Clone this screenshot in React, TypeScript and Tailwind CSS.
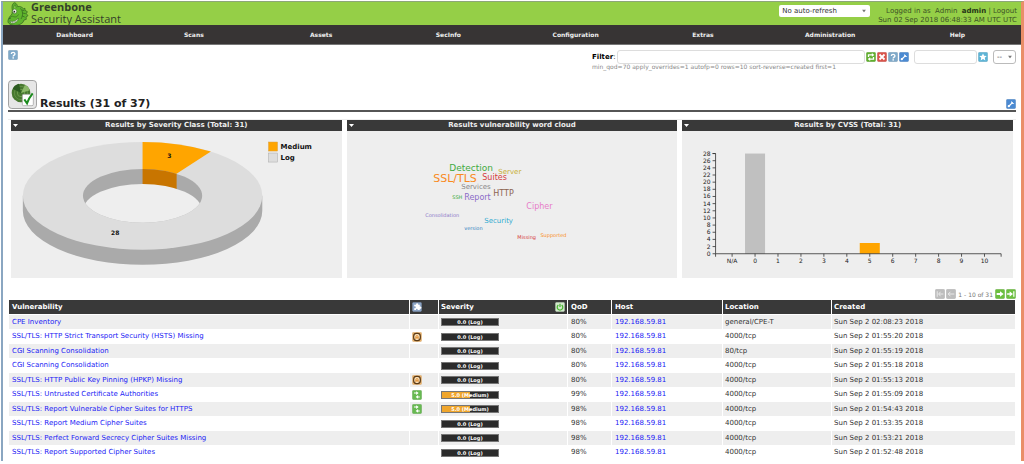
import React from "react";

type Result = {
  name: string;
  fix?: "workaround" | "vendor";
  severity: number;
  level: string;
  qod: string;
  location: string;
  created: string;
};

const host = "192.168.59.81";

const results: Result[] = [
  { name: "CPE Inventory", severity: 0, level: "Log", qod: "80%", location: "general/CPE-T", created: "Sun Sep 2 02:08:23 2018" },
  { name: "SSL/TLS: HTTP Strict Transport Security (HSTS) Missing", fix: "workaround", severity: 0, level: "Log", qod: "80%", location: "4000/tcp", created: "Sun Sep 2 01:55:20 2018" },
  { name: "CGI Scanning Consolidation", severity: 0, level: "Log", qod: "80%", location: "80/tcp", created: "Sun Sep 2 01:55:19 2018" },
  { name: "CGI Scanning Consolidation", severity: 0, level: "Log", qod: "80%", location: "4000/tcp", created: "Sun Sep 2 01:55:18 2018" },
  { name: "SSL/TLS: HTTP Public Key Pinning (HPKP) Missing", fix: "workaround", severity: 0, level: "Log", qod: "80%", location: "4000/tcp", created: "Sun Sep 2 01:55:13 2018" },
  { name: "SSL/TLS: Untrusted Certificate Authorities", fix: "vendor", severity: 5, level: "Medium", qod: "99%", location: "4000/tcp", created: "Sun Sep 2 01:55:09 2018" },
  { name: "SSL/TLS: Report Vulnerable Cipher Suites for HTTPS", fix: "vendor", severity: 5, level: "Medium", qod: "98%", location: "4000/tcp", created: "Sun Sep 2 01:54:43 2018" },
  { name: "SSL/TLS: Report Medium Cipher Suites", severity: 0, level: "Log", qod: "98%", location: "4000/tcp", created: "Sun Sep 2 01:53:35 2018" },
  { name: "SSL/TLS: Perfect Forward Secrecy Cipher Suites Missing", severity: 0, level: "Log", qod: "98%", location: "4000/tcp", created: "Sun Sep 2 01:53:21 2018" },
  { name: "SSL/TLS: Report Supported Cipher Suites", severity: 0, level: "Log", qod: "98%", location: "4000/tcp", created: "Sun Sep 2 01:52:48 2018" },
];

const menu = ["Dashboard", "Scans", "Assets", "SecInfo", "Configuration", "Extras", "Administration", "Help"];

type IconName = "help" | "refresh" | "delete" | "edit" | "star" | "first" | "previous" | "next" | "last" | "workaround" | "vendor" | "solution" | "power";

const iconFill: Record<IconName, string> = {
  help: "#7fa9c9",
  refresh: "#5fae2c",
  delete: "#d9534a",
  edit: "#4b8ad2",
  star: "#5cb4d6",
  first: "#bdbdbd",
  previous: "#bdbdbd",
  next: "#6cbf3f",
  last: "#6cbf3f",
  workaround: "#f0b870",
  vendor: "#67b951",
  solution: "#8ba3c4",
  power: "#d3e9cd",
};

function Glyph({ name }: { name: IconName }) {
  const line = { fill: "none", stroke: "#fff", strokeWidth: 2.4 };
  switch (name) {
    case "help":
      return (
        <g>
          <path d="M6 7.2C6 3.6 12.4 3.4 12.4 7c0 2.2-3.1 2.2-3.1 4.6" {...line} />
          <circle cx="9.3" cy="14.2" r="1.4" fill="#fff" />
        </g>
      );
    case "refresh":
      return (
        <g>
          <path d="M4.5 9V5.2H12M13.5 9v3.8H6" {...line} />
          <path d="M10.5 2l4.5 3.3-4.5 3.2zM7.5 9.5L3 12.8 7.5 16z" fill="#fff" />
        </g>
      );
    case "delete":
      return <path d="M4.5 4.5l9 9M13.5 4.5l-9 9" fill="none" stroke="#fff" strokeWidth="3.2" />;
    case "edit":
      return (
        <g>
          <path d="M5 13l7-7" fill="none" stroke="#fff" strokeWidth="2.2" />
          <path d="M11 3a3.6 3.6 0 0 0-1 5 3.6 3.6 0 0 0 5-1l-2.6.2-1.6-1.6z" fill="#fff" />
          <circle cx="5" cy="13" r="2" fill="#fff" />
        </g>
      );
    case "star":
      return <path d="M9 2.5l2 4.3 4.7.5-3.5 3.2 1 4.7L9 12.8l-4.2 2.4 1-4.7-3.500-3.2 4.7-.5z" fill="#fff" />;
    case "first":
      return <path d="M4 4v10M7 9h8M10 5L6.5 9l3.5 4" {...line} strokeWidth={1.6} stroke="#eee" />;
    case "previous":
      return <path d="M4 9h11M8 5L4 9l4 4" {...line} strokeWidth={1.6} stroke="#eee" />;
    case "next":
      return <path d="M3 7.3h6V4l6.5 5L9 14v-3.300H3z" fill="#fff" />;
    case "last":
      return <path d="M2 7.500h4.500V4l6 5-6 5v-3.500H2zM13 4h2.200v10H13z" fill="#fff" />;
    case "workaround":
      return (
        <g>
          <rect x="3" y="2.6" width="12" height="12.800" rx="5" fill="#fbe3bd" stroke="#5b3a16" strokeWidth="2.200" />
          <path d="M7 12.500V8.500a2 2 0 0 1 4 0v4M7 10.300h4" fill="none" stroke="#e08f35" strokeWidth="1.800" />
        </g>
      );
    case "vendor":
      return (
        <g>
          <path d="M3.500 5.500h6M9 12.500h5" {...line} strokeWidth={2} />
          <path d="M7.500 2.200L12 5.500 7.500 8.800zM11 9.200l-4.500 3.300 4.500 3.300z" fill="#fff" />
        </g>
      );
    case "solution":
      return <path d="M4 5h3.500a2 2 0 1 1 3.500 0h3v3.500a2 2 0 1 1 0 3.500v2.500h-4a1.500 1.500 0 1 0-2.500 0H4V11a1.800 1.800 0 1 0 0-3z" fill="#fff" />;
    case "power":
      return (
        <g>
          <path d="M6 5.500a5 5 0 1 0 6 0" fill="none" stroke="#4cb534" strokeWidth="2.300" />
          <path d="M9 3v6" stroke="#4cb534" strokeWidth="2.300" />
        </g>
      );
  }
}

function Icon({ name }: { name: IconName }) {
  return (
    <svg viewBox="0 0 18 18" className="block size-[10px] shrink-0" aria-hidden="true">
      <rect x="0.500" y="0.500" width="17" height="17" rx="2" fill={iconFill[name]} stroke="#000" strokeOpacity="0.120" />
      <Glyph name={name} />
    </svg>
  );
}

function IconButton({ name, label }: { name: IconName; label: string }) {
  return (
    <button type="button" aria-label={label} className="block">
      <Icon name={name} />
    </button>
  );
}

function DragonLogo() {
  return (
    <svg viewBox="0 0 66 69" className="block h-[23px] w-[22px] shrink-0" aria-hidden="true">
      <path d="M16 24C13 13 17 3 23 2c6 2 8 8 9 12 7-2 13 1 17 6l5-1v6l7 4-3 6 5 6-6 4 1 7-7 2-3 7-7 5c-6 4-14 5-21 4C9 68 2 64 3 56c1-9 7-14 12-20z" fill="#5fb52c" stroke="#2f5a20" strokeWidth="2" />
      <path d="M20 20c0-6 2-10 4-12 2 3 3 7 3 10" fill="#8ad54e" stroke="#2f5a20" strokeWidth="1.500" />
      <path d="M6 52c3-8 9-11 14-8 6 3 12-1 15-7" fill="none" stroke="#2f5a20" strokeWidth="1.500" />
      <path d="M40 19c8 8 9 20 2 32M45 24l7 2M47 33l9 2M46 42l7 3" fill="none" stroke="#2f5a20" strokeWidth="2" />
      <ellipse cx="23" cy="28" rx="6" ry="7" fill="#f4f8ec" stroke="#2f5a20" strokeWidth="1.500" />
      <circle cx="22" cy="29" r="2.500" fill="#222" />
      <path d="M8 57c9 3 20 0 27-9-1 9-10 16-21 16z" fill="#f4f4ee" stroke="#2f5a20" strokeWidth="1.500" />
      <path d="M16 59l2 4M23 57l3 4" stroke="#2f5a20" strokeWidth="1.500" />
      <circle cx="9" cy="49" r="2" fill="#2f5a20" />
    </svg>
  );
}

function ResultsIcon() {
  return (
    <svg viewBox="0 0 87 87" className="block size-[29px] shrink-0" aria-hidden="true">
      <rect x="1.500" y="1.500" width="84" height="84" rx="10" fill="#e6e6e6" stroke="#a2a2a2" strokeWidth="3" />
      <circle cx="39" cy="39" r="28" fill="#47782f" />
      <circle cx="39" cy="39" r="20" fill="none" stroke="#6d9a50" strokeWidth="2" />
      <circle cx="39" cy="39" r="11" fill="none" stroke="#7dab5c" strokeWidth="2" />
      <path d="M39 39L14 26A28 28 0 0 1 33 11z" fill="#2b5a20" />
      <path d="M39 39L66 31A28 28 0 0 0 51 14z" fill="#8cb86a" />
      <rect x="43" y="43" width="33" height="34" rx="4" fill="#fff" stroke="#999" strokeWidth="2" />
      <path d="M49 58l8 12c4-12 9-20 17-30" fill="none" stroke="#1c8b1e" strokeWidth="6" />
    </svg>
  );
}

function Caret() {
  return (
    <svg viewBox="0 0 8 6" className="pointer-events-none absolute top-1/2 right-1 h-[3px] w-[4px] -translate-y-1/2" aria-hidden="true">
      <path d="M0 0h8L4 6z" fill="#777" />
    </svg>
  );
}

function Panel({ title, children }: { title: string; children: React.ReactNode }) {
  return (
    <section className="min-w-0 bg-[#eee]">
      <header className="flex h-[11px] items-center bg-[#393939] px-[2px] text-[#eee]">
        <button type="button" aria-label={`${title} menu`} className="w-1">
          <svg viewBox="0 0 10 6" className="mx-auto block h-[3px] w-[5px]" aria-hidden="true">
            <path d="M0 0h10L5 6z" fill="#fff" />
          </svg>
        </button>
        <h2 className="flex-1 pr-1 text-center text-[7px] leading-[11px] font-bold">{title}</h2>
      </header>
      {children}
    </section>
  );
}

function SeverityDonut() {
  return (
    <svg viewBox="0 0 330 147" className="block w-full" role="img" aria-label="Results by severity class">
      <defs>
        <clipPath id="hole">
          <ellipse cx="131.300" cy="64.700" rx="59.500" ry="26.800" />
        </clipPath>
      </defs>
      <path d="M11.800 64.700v15a119.500 53.800 0 0 0 239 0v-15z" fill="#aaa" />
      <ellipse cx="131.300" cy="64.700" rx="119.500" ry="53.800" fill="#ddd" />
      <path d="M131.300 64.700V10.900A119.500 53.800 0 0 1 199.500 20.500z" fill="#ffa500" />
      <path d="M71 64.700h121v29H71z" fill="#ddd" />
      <g clipPath="url(#hole)">
        <rect x="70" y="36" width="124" height="58" fill="#aaa" />
        <rect x="131.300" y="36" width="34" height="28" fill="#c87500" />
        <ellipse cx="131.300" cy="79.700" rx="59.500" ry="26.800" fill="#eee" />
      </g>
      <g fontSize="6" fontWeight="bold" textAnchor="middle" fill="#111">
        <text x="158" y="27">3</text>
        <text x="104" y="104">28</text>
      </g>
      <rect x="257" y="11" width="9" height="9" fill="#ffa500" stroke="#d9a040" strokeWidth="0.500" />
      <rect x="257" y="22" width="9" height="9" fill="#ddd" stroke="#aaa" strokeWidth="0.500" />
      <g fontSize="7" fontWeight="bold" fill="#111">
        <text x="269" y="18">Medium</text>
        <text x="269" y="29">Log</text>
      </g>
    </svg>
  );
}

const words = [
  { text: "Detection", x: 102, y: 40, size: 9, color: "#3faa3f" },
  { text: "Server", x: 151, y: 43, size: 7, color: "#c9ae35" },
  { text: "SSL/TLS", x: 86, y: 51, size: 11, color: "#f98a20" },
  { text: "Suites", x: 135, y: 49, size: 8, color: "#d63c3c" },
  { text: "Services", x: 114, y: 58, size: 7, color: "#888888" },
  { text: "HTTP", x: 146, y: 65, size: 8, color: "#8c6450" },
  { text: "SSH", x: 105, y: 68, size: 5, color: "#3faa3f" },
  { text: "Report", x: 117, y: 69, size: 8, color: "#8b6cc8" },
  { text: "Cipher", x: 179, y: 78, size: 8, color: "#e77cc8" },
  { text: "Consolidation", x: 78, y: 86, size: 5, color: "#8b78c8" },
  { text: "Security", x: 137, y: 92, size: 7, color: "#2eaad0" },
  { text: "version", x: 117, y: 99, size: 5, color: "#2f7fc0" },
  { text: "Missing", x: 170, y: 108, size: 5, color: "#d63c3c" },
  { text: "Supported", x: 193, y: 106, size: 5, color: "#f98a20" },
];

function WordCloud() {
  return (
    <svg viewBox="0 0 330 147" className="block w-full" role="img" aria-label="Vulnerability word cloud">
      {words.map((w) => (
        <text key={w.text} x={w.x} y={w.y} fontSize={w.size} fill={w.color}>
          {w.text}
        </text>
      ))}
    </svg>
  );
}

const cvssLabels = ["N/A", "0", "1", "2", "3", "4", "5", "6", "7", "8", "9", "10"];
const cvssCounts = [0, 28, 0, 0, 0, 0, 3, 0, 0, 0, 0, 0];

function CvssChart() {
  const bottom = 122.5;
  const unit = 100 / 28;
  const left = 33.5;
  const step = 22.9;
  const center = (i: number) => 50 + i * step;
  return (
    <svg viewBox="0 0 330 147" className="block w-full" role="img" aria-label="Results by CVSS">
      {cvssCounts.map((n, i) =>
        n ? <rect key={i} x={center(i) - 10} y={bottom - n * unit} width="20" height={n * unit} fill={i === 1 ? "#c0c0c0" : "#ffa500"} /> : null
      )}
      <path d={`M${left - 3} ${bottom - 100}H${left}V${bottom}H318.500v3M${left} ${bottom}v3`} fill="none" stroke="#333" strokeWidth="0.800" />
      {Array.from({ length: 15 }, (_, i) => (
        <g key={i}>
          <path d={`M${left - 3} ${bottom - i * 2 * unit}h3`} stroke="#333" strokeWidth="0.800" />
          <text x={left - 5} y={bottom - i * 2 * unit + 2} fontSize="6" textAnchor="end" fill="#222">
            {i * 2}
          </text>
        </g>
      ))}
      {cvssLabels.map((label, i) => (
        <g key={label}>
          <path d={`M${center(i)} ${bottom}v3`} stroke="#333" strokeWidth="0.800" />
          <text x={center(i)} y="132" fontSize="6" textAnchor="middle" fill="#222">
            {label}
          </text>
        </g>
      ))}
    </svg>
  );
}

function SeverityBar({ value, level }: { value: number; level: string }) {
  return (
    <div className="relative h-[8px] w-[58px] border border-[#777] bg-[#2b2b2b]">
      <div className="h-full bg-[#f0a62c]" style={{ width: `${value * 10}%` }} />
      <span className="absolute inset-0 text-center text-[5px] leading-[6px] font-bold text-white">
        {value.toFixed(1)} ({level})
      </span>
    </div>
  );
}

export default function App() {
  return (
    <div className="mt-px ml-px border-t border-r-[3px] border-l-2 border-t-[#8da678] border-r-[#e98e68] border-l-[#8aa6c1] bg-white font-['DejaVu_Sans',sans-serif] text-[7px] leading-[9px] text-[#333]">
      <header className="flex h-[23px] justify-between bg-[#95cf47]">
        <a href="#home" className="flex pl-1 font-['Open_Sans',sans-serif] text-[#33402a]">
          <DragonLogo />
          <span className="flex flex-col pl-[2px]">
            <span className="text-[11px] leading-[10px] font-bold">Greenbone</span>
            <span className="text-[11px] leading-[13px]">Security Assistant</span>
          </span>
        </a>
        <div className="flex items-start gap-2 pt-[3px] pr-1">
          <div className="relative">
            <select aria-label="Auto-refresh" className="block h-3 w-[91px] appearance-none rounded-xs bg-white pl-[3px] text-[7px] leading-3">
              <option>No auto-refresh</option>
            </select>
            <Caret />
          </div>
          <div className="pt-[2px] text-right leading-[9px] whitespace-nowrap text-[#3c5226]">
            <div>
              Logged in as&nbsp; <a href="#user">Admin&nbsp; <b className="text-[#263617]">admin</b></a> | <a href="#logout">Logout</a>
            </div>
            <div>Sun 02 Sep 2018 06:48:33 AM UTC UTC</div>
          </div>
        </div>
      </header>

      <nav className="grid h-5 grid-cols-8 items-center border-b border-[#777] bg-[#373434] text-[6px] font-bold text-[#eee]">
        {menu.map((item) => (
          <a key={item} href={`#${item.toLowerCase()}`} className="text-center first:pl-4">
            {item}
          </a>
        ))}
      </nav>

      <main className="px-[5px] pb-px">
        <div className="flex h-[34px] items-start justify-between pt-[5px]">
          <IconButton name="help" label="Help: Results" />
          <form className="flex items-start gap-[5px]" onSubmit={(e) => e.preventDefault()}>
            <div>
              <div className="flex items-center gap-px">
                <label htmlFor="filter" className="w-6 whitespace-nowrap text-black">
                  <b>Filter</b>:
                </label>
                <input id="filter" type="text" className="h-[14px] w-[248px] rounded-[3px] border border-[#ddd] bg-white px-1" />
                <IconButton name="refresh" label="Update filter" />
                <IconButton name="delete" label="Reset filter" />
                <IconButton name="help" label="Help: Powerfilter" />
                <IconButton name="edit" label="Edit filter" />
              </div>
              <p className="text-[6px] leading-[6px] text-[#888]">min_qod=70 apply_overrides=1 autofp=0 rows=10 sort-reverse=created first=1</p>
            </div>
            <div className="flex items-center gap-px">
              <input type="text" aria-label="Filter name" className="h-[14px] w-[63px] rounded-[3px] border border-[#ddd] bg-white px-1" />
              <IconButton name="star" label="Create filter" />
            </div>
            <div className="relative">
              <select aria-label="Saved filter" className="block h-[14px] w-[23px] appearance-none rounded-[3px] border border-[#bbb] bg-white pl-[3px] text-[7px]">
                <option>--</option>
              </select>
              <Caret />
            </div>
          </form>
        </div>

        <div className="flex h-[33px] items-end border-b-2 border-[#555] pb-px">
          <ResultsIcon />
          <h1 className="flex-1 pl-[3px] text-[11px] leading-[11px] font-bold text-[#222]">Results (31 of 37)</h1>
          <IconButton name="edit" label="Edit dashboard" />
        </div>

        <div className="mt-[7px] grid grid-cols-3 gap-[5px] border-t border-[#eee] px-[3px]">
          <Panel title="Results by Severity Class (Total: 31)">
            <SeverityDonut />
          </Panel>
          <Panel title="Results vulnerability word cloud">
            <WordCloud />
          </Panel>
          <Panel title="Results by CVSS (Total: 31)">
            <CvssChart />
          </Panel>
        </div>

        <div className="mt-[11px] flex h-[10px] items-center justify-end gap-px text-[6px] text-[#777]">
          <IconButton name="first" label="First page" />
          <IconButton name="previous" label="Previous page" />
          <span className="px-px">1 - 10 of 31</span>
          <IconButton name="next" label="Next page" />
          <IconButton name="last" label="Last page" />
        </div>

        <table className="w-full table-fixed border-separate border-spacing-px">
          <colgroup>
            <col />
            <col className="w-[28px]" />
            <col className="w-[128px]" />
            <col className="w-[43px]" />
            <col className="w-[110px]" />
            <col className="w-[108px]" />
            <col className="w-[183px]" />
          </colgroup>
          <thead>
            <tr className="h-[14px] bg-[#393939] text-left text-white">
              <th className="px-[3px] py-0">Vulnerability</th>
              <th className="px-[2px] py-0" aria-label="Solution type">
                <Icon name="solution" />
              </th>
              <th className="px-[2px] py-0">
                <div className="flex items-center justify-between">
                  Severity
                  <IconButton name="power" label="Overrides are applied" />
                </div>
              </th>
              <th className="px-[3px] py-0">QoD</th>
              <th className="px-[3px] py-0">Host</th>
              <th className="px-[2px] py-0">Location</th>
              <th className="px-[2px] py-0">Created</th>
            </tr>
          </thead>
          <tbody>
            {results.map((r) => (
              <tr key={r.created} className="h-[13px] odd:h-[14px] odd:bg-[#eee]">
                <td className="truncate px-[3px] py-0">
                  <a href="#result" className="text-[#1a1af5]">{r.name}</a>
                </td>
                <td className="px-[2px] py-0">{r.fix ? <Icon name={r.fix} /> : null}</td>
                <td className="px-[2px] py-0">
                  <SeverityBar value={r.severity} level={r.level} />
                </td>
                <td className="px-[3px] py-0">{r.qod}</td>
                <td className="px-[3px] py-0">
                  <a href="#host" className="text-[#1a1af5]">{host}</a>
                </td>
                <td className="px-[2px] py-0">{r.location}</td>
                <td className="px-[2px] py-0">{r.created}</td>
              </tr>
            ))}
          </tbody>
        </table>
      </main>
    </div>
  );
}
